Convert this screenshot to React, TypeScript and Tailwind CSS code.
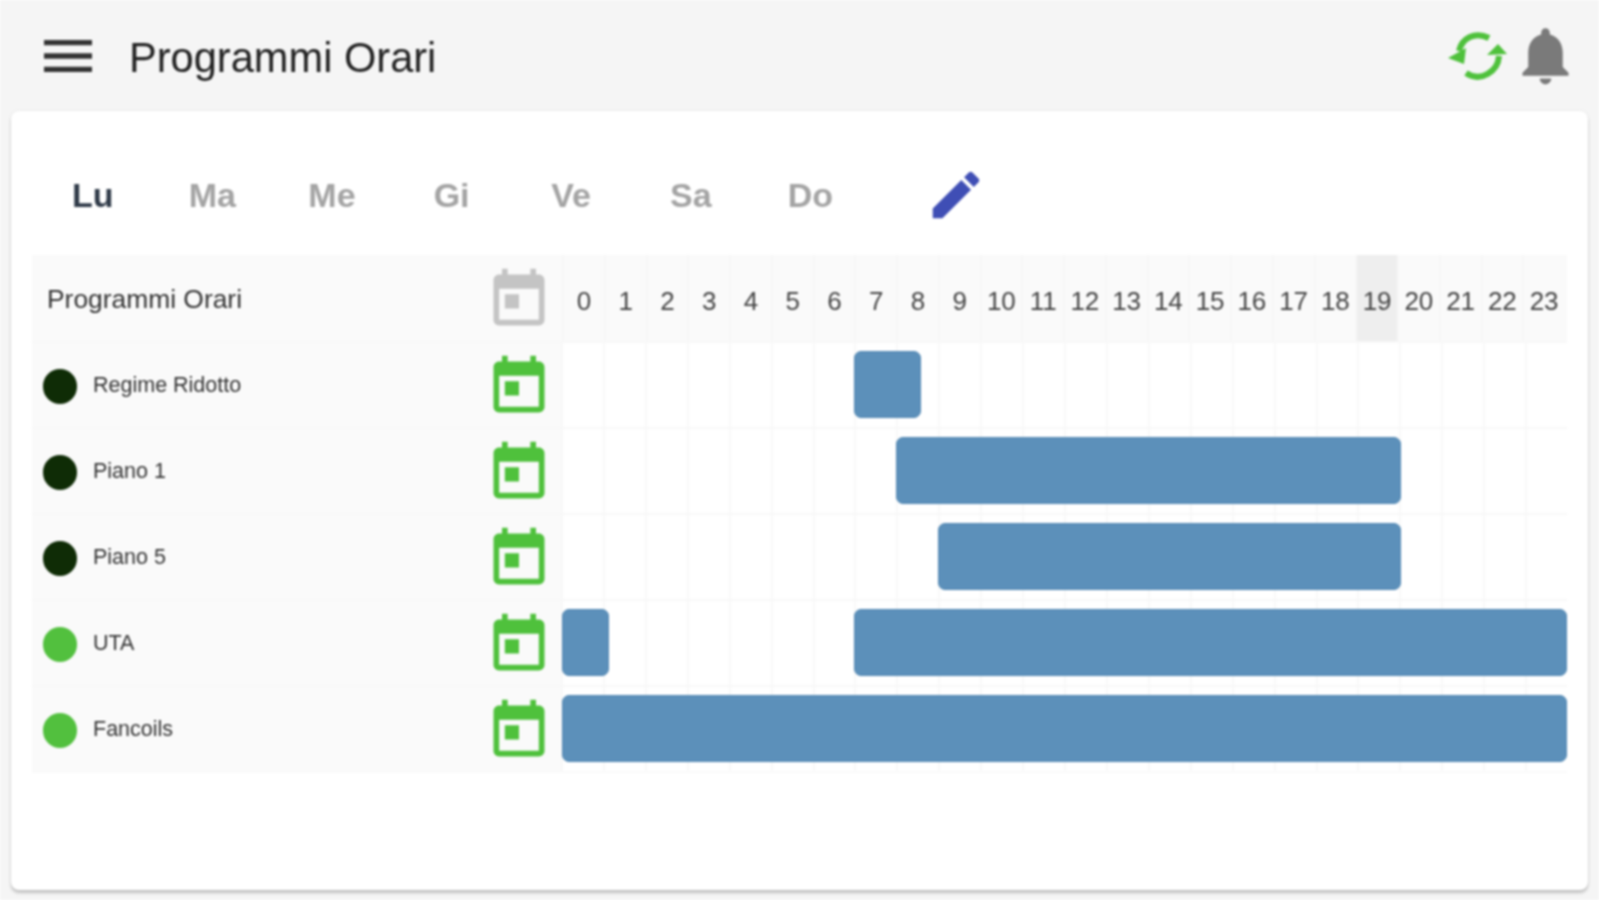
const DAYS = ["Lu", "Ma", "Me", "Gi", "Ve", "Sa", "Do"];
const HOURS = Array.from({ length: 24 }, (_, i) => i);

type Row = {
  name: string;
  on: boolean;
  bars: [number, number][];
};

const ROWS: Row[] = [
  { name: "Regime Ridotto", on: false, bars: [[7, 8.55]] },
  { name: "Piano 1", on: false, bars: [[8, 20]] },
  { name: "Piano 5", on: false, bars: [[9, 20]] },
  { name: "UTA", on: true, bars: [[0, 1.1], [7, 24]] },
  { name: "Fancoils", on: true, bars: [[0, 24]] },
];

function TodayIcon({ className }: { className: string }) {
  return (
    <svg viewBox="0 0 24 24" className={className} fill="currentColor">
      <path d="M19 3h-1V1h-2v2H8V1H6v2H5c-1.11 0-1.99.9-1.99 2L3 19c0 1.1.89 2 2 2h14c1.1 0 2-.9 2-2V5c0-1.1-.9-2-2-2zm0 16H5V8h14v11zM7 10h5v5H7z" />
    </svg>
  );
}

function SyncIcon() {
  return (
    <svg viewBox="0 0 59 49" className="h-[49px] w-[59px] text-[#4fc13c]">
      <path d="M11 20C14 7 27 0 41 7" fill="none" stroke="currentColor" strokeWidth="6" />
      <path d="M51 25C50 40 33 52 18 42" fill="none" stroke="currentColor" strokeWidth="6" />
      <path d="M0 27L18 17L16 33Z" fill="currentColor" />
      <path d="M59 23L39 24L50 13Z" fill="currentColor" />
    </svg>
  );
}

export default function App() {
  return (
    <div className="flex h-[900px] w-[1599px] flex-col overflow-hidden bg-[#f5f5f5] font-['Liberation_Sans',sans-serif] text-[#222] blur-[1px]">
      <header className="flex h-[111px] shrink-0 items-center pl-[36px] pr-[19px]">
        <svg viewBox="0 0 24 24" className="h-[64px] w-[64px] text-[#333]" fill="currentColor">
          <path d="M3 18h18v-2H3v2zm0-5h18v-2H3v2zm0-7v2h18V6H3z" />
        </svg>
        <h1 className="ml-[29px] mt-[4px] text-[41.6px] leading-none">Programmi Orari</h1>
        <div className="ml-auto flex items-center">
          <SyncIcon />
          <svg viewBox="0 0 24 24" className="ml-[4px] h-[69px] w-[69px] text-[#7a7a7a]" fill="currentColor">
            <path d="M12 22c1.1 0 2-.9 2-2h-4c0 1.1.89 2 2 2zm6-6v-5c0-3.07-1.64-5.64-4.5-6.32V4c0-.83-.67-1.5-1.5-1.5s-1.5.67-1.5 1.5v.68C7.63 5.36 6 7.92 6 11v5l-2 2v1h16v-1l-2-2z" />
          </svg>
        </div>
      </header>

      <main className="mx-[11px] h-[779px] rounded-[8px] bg-white px-[21px] pt-[35px] shadow-[0_3px_3px_rgba(0,0,0,0.2),0_0_3px_rgba(0,0,0,0.08)]">
        <div className="flex h-[109px] items-center pb-[11px] pl-[1px]">
          {DAYS.map((d, i) => (
            <div
              key={d}
              className={`w-[119.6px] text-center text-[34px] font-bold ${i === 0 ? "text-[#2f3a48]" : "text-[#a4a4a4]"}`}
            >
              {d}
            </div>
          ))}
          <svg viewBox="0 0 24 24" className="ml-[55px] h-[62px] w-[62px] text-[#3f4eb5]" fill="currentColor">
            <path d="M3 17.25V21h3.75L17.81 9.94l-3.75-3.75L3 17.25zM20.71 7.04c.39-.39.39-1.02 0-1.41l-2.34-2.34c-.39-.39-1.02-.39-1.41 0l-1.83 1.83 3.75 3.75 1.83-1.83z" />
          </svg>
        </div>

        <div className="bg-[#fafafa] pb-[2px]">
          <div className="flex h-[86px]">
            <div className="flex w-[445px] items-center pl-[15px] pt-[3px] text-[26.4px] text-[#333]">Programmi Orari</div>
            <div className="flex w-[84px] items-center justify-center pt-[4px]">
              <TodayIcon className="h-[68px] w-[68px] text-[#c4c4c4]" />
            </div>
            <div className="grid flex-1 grid-cols-24 pl-[1px] pr-[3px]">
              {HOURS.map((h) => (
                <div
                  key={h}
                  className={`flex items-center justify-center border-l-2 border-[#f6f6f6] pt-[7px] text-[26px] text-[#444] ${h === 19 ? "bg-[#eeeeee]" : ""}`}
                >
                  {h}
                </div>
              ))}
            </div>
          </div>

          {ROWS.map((row) => (
            <div key={row.name} className="flex h-[86px] border-t-2 border-[#f8f8f8]">
              <div className="flex w-[445px] items-center pl-[11px]">
                <span className={`mt-[3px] h-[35px] w-[34px] rounded-full ${row.on ? "bg-[#52c03e]" : "bg-[#0f2c06]"}`} />
                <span className="ml-[16px] text-[21.5px] text-[#333]">{row.name}</span>
              </div>
              <div className="flex w-[84px] items-center justify-center pt-[4px]">
                <TodayIcon className="h-[68px] w-[68px] text-[#4fc13c]" />
              </div>
              <div className="relative grid flex-1 grid-cols-24 bg-white">
                {HOURS.map((h) => (
                  <div key={h} className="border-l-2 border-[#f8f8f8]" />
                ))}
                {row.bars.map(([from, to]) => (
                  <div
                    key={from}
                    className="absolute bottom-[9px] top-[8px] rounded-[7px] border border-[#5489b5] bg-[#5c90ba]"
                    style={{
                      left: from === 0 ? "1px" : `calc(${(from / 24) * 100}% - 0.5px)`,
                      right: to === 24 ? "0" : `calc(${100 - (to / 24) * 100}% - 2px)`,
                    }}
                  />
                ))}
              </div>
            </div>
          ))}
        </div>
      </main>
    </div>
  );
}
